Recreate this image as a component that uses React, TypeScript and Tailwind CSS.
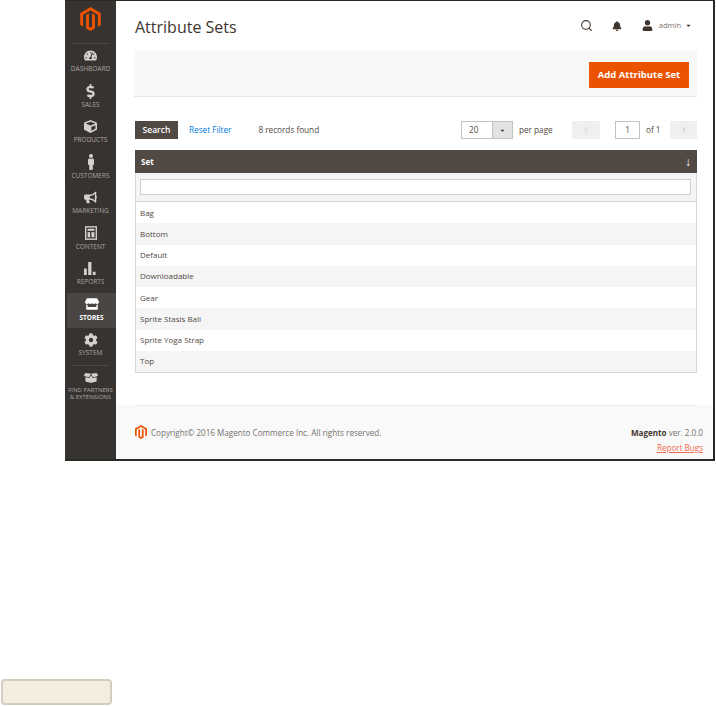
import { ReactNode } from "react";
import { Search, ChevronLeft, ChevronRight } from "lucide-react";
import {
  FaBell,
  FaBoxOpen,
  FaBullhorn,
  FaCaretDown,
  FaCog,
  FaCube,
  FaDollarSign,
  FaMale,
  FaStore,
  FaTachometerAlt,
  FaUser,
} from "react-icons/fa";

const MagentoLogo = ({ className }: { className: string }) => (
  <svg viewBox="0 0 24 28" className={className} fill="currentColor">
    <path d="M12 0 0 7v14l3.4 2V9l8.600-5 8.600 5v14l3.400-2V7z" />
    <path d="M12 28l-5.200-3V9.400l3.400-2V23l1.800 1 1.800-1V7.400l3.400 2V25z" />
  </svg>
);

const ContentIcon = () => (
  <svg viewBox="0 0 14 16" className="h-[14px] w-[12px]" fill="none" stroke="currentColor">
    <rect x="0.8" y="0.8" width="12.400" height="14.400" strokeWidth="1.600" />
    <rect x="3" y="3" width="8" height="2.500" fill="currentColor" stroke="none" />
    <rect x="3" y="7" width="3" height="6" fill="currentColor" stroke="none" />
    <rect x="7.500" y="7" width="3.500" height="6" fill="currentColor" stroke="none" />
  </svg>
);

const ReportsIcon = () => (
  <svg viewBox="0 0 14 14" className="h-[13px] w-[13px]" fill="currentColor">
    <rect x="0" y="7" width="3" height="7" />
    <rect x="4.500" y="0" width="3.500" height="14" />
    <rect x="9.500" y="10.500" width="3" height="3.500" />
  </svg>
);

type NavItem = { label: ReactNode; icon: ReactNode; active?: boolean };

const navItems: NavItem[] = [
  { label: "Dashboard", icon: <FaTachometerAlt className="h-[13px] w-[13px]" /> },
  { label: "Sales", icon: <FaDollarSign className="h-[15px] w-[15px]" /> },
  { label: "Products", icon: <FaCube className="h-[13px] w-[13px]" /> },
  { label: "Customers", icon: <FaMale className="h-[16px] w-[16px]" /> },
  { label: "Marketing", icon: <FaBullhorn className="h-[13px] w-[13px]" /> },
  { label: "Content", icon: <ContentIcon /> },
  { label: "Reports", icon: <ReportsIcon /> },
  { label: "Stores", icon: <FaStore className="h-[14px] w-[14px]" />, active: true },
  { label: "System", icon: <FaCog className="h-[14px] w-[14px]" /> },
];

const rows = [
  "Bag",
  "Bottom",
  "Default",
  "Downloadable",
  "Gear",
  "Sprite Stasis Ball",
  "Sprite Yoga Strap",
  "Top",
];

function Sidebar() {
  return (
    <aside className="flex w-[51px] shrink-0 flex-col bg-[#373330] text-[#d4d0cc]">
      <div className="mx-[7px] flex h-[43px] items-start justify-center border-b border-[#4d4945] pt-[6px] text-[#eb5202]">
        <MagentoLogo className="h-[24px] w-[21px]" />
      </div>
      <nav className="flex flex-col">
        {navItems.map((item, i) => (
          <div
            key={i}
            className={`flex h-[35.500px] flex-col items-center pt-[3px] ${
              item.active ? "ml-[2px] bg-[#4a4643] text-white" : ""
            }`}
          >
            <div className="flex h-[17px] items-center justify-center">{item.icon}</div>
            <span
              className={`text-[6.500px] leading-[9px] uppercase ${
                item.active ? "font-bold" : "text-[#aaa6a2]"
              }`}
            >
              {item.label}
            </span>
          </div>
        ))}
        <div className="mx-[7px] mt-[1px] border-t border-[#4d4945]" />
        <div className="flex flex-col items-center pt-[5px]">
          <FaBoxOpen className="h-[14px] w-[14px]" />
          <span className="mt-[2px] text-center text-[6px] leading-[7px] whitespace-nowrap text-[#aaa6a2] uppercase">
            Find Partners
            <br />& Extensions
          </span>
        </div>
      </nav>
    </aside>
  );
}

function Toolbar() {
  return (
    <div className="mt-[24px] flex h-[18px] items-center text-[8.200px] text-[#514943]">
      <button className="flex h-[18px] w-[43px] items-center justify-center bg-[#514943] text-[8.500px] font-semibold text-white">
        Search
      </button>
      <span className="ml-[11px] text-[#007bdb]">Reset Filter</span>
      <span className="ml-[27px]">8 records found</span>
      <div className="ml-auto flex h-[18px] w-[52px] border border-[#c2c2c2]">
        <span className="flex flex-1 items-center pl-[7px]">20</span>
        <span className="flex w-[20px] items-center justify-center border-l border-[#c2c2c2] bg-[#e3e3e3]">
          <FaCaretDown className="h-[7px] w-[7px] text-[#514943]" />
        </span>
      </div>
      <span className="ml-[6px] w-[53px]">per page</span>
      <span className="flex h-[18px] w-[28px] items-center justify-center bg-[#efefef] text-[#c4c4c4]">
        <ChevronLeft className="h-[10px] w-[10px]" />
      </span>
      <span className="ml-[15px] flex h-[18px] w-[25px] items-center justify-center border border-[#c2c2c2]">
        1
      </span>
      <span className="ml-[6px] w-[24px]">of 1</span>
      <span className="flex h-[18px] w-[27px] items-center justify-center bg-[#efefef] text-[#b8b8b8]">
        <ChevronRight className="h-[10px] w-[10px]" />
      </span>
    </div>
  );
}

function SetsTable() {
  return (
    <div className="mt-[11px] border-x border-b border-[#d6d6d6] text-[8px] text-[#514943]">
      <div className="-mx-px flex h-[23px] items-center justify-between bg-[#514943] px-[6px] text-[8px] font-bold text-white">
        <span>Set</span>
        <span className="text-[12px] leading-none">↓</span>
      </div>
      <div className="flex h-[29px] items-center border-b border-[#d6d6d6] bg-[#f5f5f5] pr-[5px] pl-[4px]">
        <div className="h-[16px] w-full border border-[#cfcfcf] bg-white" />
      </div>
      {rows.map((row, i) => (
        <div
          key={row}
          className={`flex h-[21.250px] items-center px-[4px] ${i % 2 === 1 ? "bg-[#f5f5f5]" : "bg-white"}`}
        >
          {row}
        </div>
      ))}
    </div>
  );
}

function Footer() {
  return (
    <footer className="mt-[32px] flex flex-1 flex-col bg-[#f9f9f9] pr-[10px] pl-[19px] text-[8.100px] text-[#77716c]">
      <div className="mr-[6px] border-t border-[#ececec]" />
      <div className="mt-[19px] flex justify-between">
        <div className="flex items-start">
          <MagentoLogo className="h-[14px] w-[12px] text-[#eb5202]" />
          <span className="mt-[2px] ml-[4px]">Copyright© 2016 Magento Commerce Inc. All rights reserved.</span>
        </div>
        <div className="flex flex-col items-end pt-[2px]">
          <span>
            <b className="text-[#41362f]">Magento</b> ver. 2.0.0
          </span>
          <span className="mt-[3px] text-[#ee6a4a] underline">Report Bugs</span>
        </div>
      </div>
    </footer>
  );
}

export default function App() {
  return (
    <div className="h-[706px] w-[716px] overflow-hidden bg-white font-['Open_Sans',sans-serif]">
      <div className="ml-[65px] flex h-[461px] w-[650px] border-t border-r-2 border-b-2 border-[#2b2925]">
        <Sidebar />
        <main className="flex min-w-0 flex-1 flex-col bg-white">
          <div className="pr-[16px] pl-[19px]">
            <header className="flex h-[49px] items-center text-[#41362f]">
              <h1 className="mt-[3px] text-[16px] text-[#41362f]">Attribute Sets</h1>
              <Search className="mr-[19px] ml-auto h-[13px] w-[13px]" strokeWidth={2} />
              <FaBell className="mr-[20px] h-[10px] w-[10px]" />
              <FaUser className="h-[11px] w-[11px]" />
              <span className="ml-[6px] text-[7.500px] text-[#77716c]">admin</span>
              <FaCaretDown className="mr-[5px] ml-[4px] h-[7px] w-[7px]" />
            </header>
            <div className="-ml-px flex h-[47px] items-start justify-end border-b border-[#e8e8e8] bg-[#f8f8f8] pt-[12px] pr-[8px]">
              <button className="flex h-[26px] w-[100px] items-center justify-center bg-[#eb5202] text-[9.500px] font-bold text-white">
                Add Attribute Set
              </button>
            </div>
            <Toolbar />
            <SetsTable />
          </div>
          <Footer />
        </main>
      </div>
      <div className="mt-[218px] ml-[1px] h-[26px] w-[111px] rounded-[4px] border-2 border-[#d5cdbd] bg-[#f3ecdf]" />
    </div>
  );
}
